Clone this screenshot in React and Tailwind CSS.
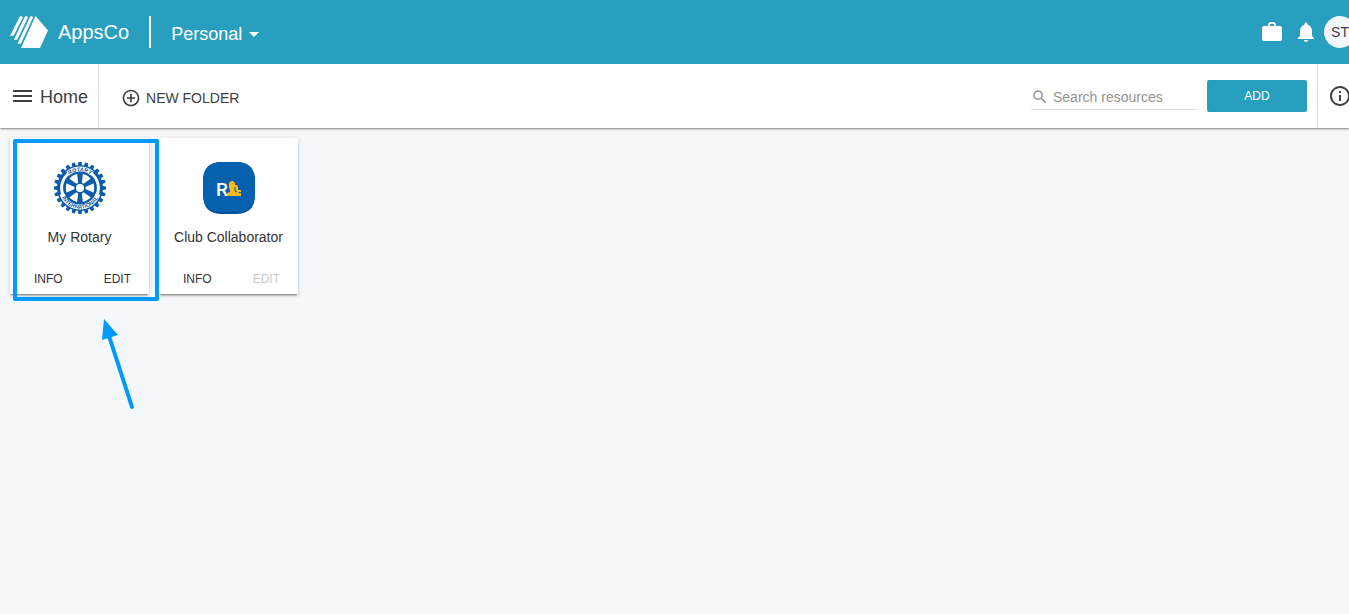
import React, { useState } from 'react';
import { MdAddCircleOutline, MdNotifications, MdOutlineInfo, MdSearch } from 'react-icons/md';

const TEETH = Array.from({ length: 24 }, (_, i) => i * 15);
const SPOKES = [0, 60, 120, 180, 240, 300];

const AppsCoLogo = () => (
  <svg width="38" height="32" viewBox="0 0 38 32" fill="#fff" aria-hidden="true">
    <path d="M25.5 0 L38 14.5 L30 32 H11 Z" />
    <path d="M9.5 1 L10.5 0 L13 1 L3.8 19.5 L0 20 Z" />
    <path d="M14.7 1 L15.7 0 L18.2 1 L7.4 23.5 L3.8 24 Z" />
    <path d="M20 1 L21 0 L23.2 1 L11 27.5 L7.4 28 Z" />
  </svg>
);

const BriefcaseIcon = () => (
  <svg width="20" height="20" viewBox="0 0 20 20" fill="#fff" aria-hidden="true">
    <path
      fillRule="evenodd"
      d="M8 0 H12 L14 2 V4 H18 Q20 4 20 6 V17 Q20 19 18 19 H2 Q0 19 0 17 V6 Q0 4 2 4 H6 V2 Z M8 2 V4 H12 V2 Z"
    />
  </svg>
);

const RotaryWheel = () => (
  <svg width="52" height="52" viewBox="-26 -26 52 52" aria-hidden="true">
    <defs>
      <path id="wheel-top" d="M-16.8 0 A16.8 16.8 0 0 1 16.8 0" />
      <path id="wheel-bottom" d="M-20.6 0 A20.6 20.6 0 0 0 20.6 0" />
    </defs>
    <g fill="#0a5dab">
      {TEETH.map((angle) => (
        <path key={angle} d="M-1.6 -26 H1.6 L2.2 -21 H-2.2 Z" transform={`rotate(${angle})`} />
      ))}
      <circle r="23" />
    </g>
    <circle r="18.4" fill="none" stroke="#fff" strokeWidth="3" />
    <g fill="none" stroke="#fff" strokeWidth="5">
      <path d="M-12.2 -14.5 A19 19 0 0 1 12.2 -14.5" />
      <path d="M-18 6 A19 19 0 0 0 18 6" />
    </g>
    <circle r="15.2" fill="#fff" stroke="#0a5dab" strokeWidth="2" />
    <g fill="#0a5dab">
      {SPOKES.map((angle) => (
        <path key={angle} d="M-1.7 -4 L-3 -15.5 H3 L1.7 -4 Z" transform={`rotate(${angle})`} />
      ))}
      <circle r="5.6" />
    </g>
    <circle r="4" fill="#fff" />
    <g fill="#0a5dab" fontFamily="Liberation Sans, sans-serif" fontWeight="700" fontSize="5.5" textAnchor="middle">
      <text>
        <textPath href="#wheel-top" startOffset="50%">ROTARY</textPath>
      </text>
      <text>
        <textPath href="#wheel-bottom" startOffset="50%">INTERNATIONAL</textPath>
      </text>
    </g>
  </svg>
);

const ClubIcon = () => (
  <svg width="52" height="52" viewBox="0 0 52 52" aria-hidden="true">
    <path
      fill="#04549b"
      d="M19 0 H33 Q52 0 52 19 V33 Q52 52 33 52 H19 Q0 52 0 33 V19 Q0 0 19 0 Z"
    />
    <path
      fill="#0560ae"
      d="M19 0 H33 Q52 0 52 19 V31 Q52 50 33 50 H19 Q0 50 0 31 V19 Q0 0 19 0 Z"
    />
    <text x="13" y="34" fill="#fff" fontFamily="Roboto, sans-serif" fontWeight="500" fontSize="19">
      R
    </text>
    <path
      fill="#fdb913"
      d="M24 34 V31 L27 30 V28 L26 26 V21 L28 19 H30 L32 21 V23 H34 L35 25 V28 H38 V30 H36 L35 31 H38 V34 Z"
    />
    <path d="M32 25 V29 L34 30" fill="none" stroke="#0560ae" />
  </svg>
);

const resources = [
  { name: 'My Rotary', icon: RotaryWheel, editable: true, highlighted: true },
  { name: 'Club Collaborator', icon: ClubIcon, editable: false, highlighted: false },
];

const Highlight = () => (
  <>
    <div className="pointer-events-none absolute top-px left-[3px] z-10 h-[162px] w-[146px] rounded-xs border-4 border-[#0099ff]" />
    <svg className="pointer-events-none absolute top-[180px] left-[90px]" width="36" height="92" viewBox="0 0 36 92" aria-hidden="true">
      <path d="M9 18 L32 89" stroke="#0099ff" strokeWidth="4" strokeLinecap="round" />
      <path d="M4 1 L18 17 L2 22 Z" fill="#0099ff" />
    </svg>
  </>
);

const ResourceCard = ({ name, icon: Icon, editable, highlighted }) => (
  <article className="relative w-[139px] bg-white pt-6 pb-[7px] shadow-[0_2px_2px_-1px_rgba(0,0,0,0.5),0_1px_5px_rgba(0,0,0,0.14)]">
    <div className="flex flex-col items-center gap-[11px]">
      <Icon />
      <h2 className="text-sm leading-6 whitespace-nowrap text-[#333]">{name}</h2>
    </div>
    <div className="mt-[22px] flex h-4 items-center justify-between pr-[18px] pl-6 text-xs text-[#333]">
      <button type="button">INFO</button>
      <button type="button" disabled={!editable} className="disabled:text-[#c9c9c9]">
        EDIT
      </button>
    </div>
    {highlighted && <Highlight />}
  </article>
);

const App = () => {
  const [search, setSearch] = useState('');

  return (
    <div className="min-h-screen overflow-x-hidden bg-[#f4f8fb] font-['Liberation_Sans',Arial,sans-serif] text-[#414042]">
      <header className="relative z-10 flex h-16 items-center bg-[#289fbe] pl-[10px] text-white">
        <a href="#home" className="flex items-center gap-[10px] text-xl">
          <AppsCoLogo />
          AppsCo
        </a>
        <div className="ml-5 h-8 w-[2px] bg-white" />
        <button type="button" className="ml-5 flex items-center gap-[7px] pt-1 text-lg">
          Personal
          <svg width="10" height="5" viewBox="0 0 10 5" fill="#fff" aria-hidden="true">
            <path d="M0 0 H10 L5 5 Z" />
          </svg>
        </button>
        <div className="-mr-[7px] ml-auto flex items-center">
          <button type="button" aria-label="Company">
            <BriefcaseIcon />
          </button>
          <button type="button" aria-label="Notifications" className="ml-3">
            <MdNotifications size={24} />
          </button>
          <button type="button" className="ml-[6px] size-8 rounded-full bg-[#f4f8fb] text-sm text-[#414042]">
            ST
          </button>
        </div>
      </header>

      <div className="relative flex h-16 items-center bg-white shadow-[0_1px_2px_rgba(0,0,0,0.5)]">
        <div className="flex h-full items-center gap-2 border-r border-[#dcdcdc] pr-[10px] pl-[13px]">
          <button type="button" aria-label="Menu">
            <svg width="19" height="12" viewBox="0 0 19 12" fill="#414042" aria-hidden="true">
              <path d="M0 0 H19 V2 H0 Z M0 5 H19 V7 H0 Z M0 10 H19 V12 H0 Z" />
            </svg>
          </button>
          <h1 className="pt-px text-lg">Home</h1>
        </div>
        <button type="button" className="ml-[22px] flex items-center gap-[5px] pt-[3px] text-sm">
          <MdAddCircleOutline size={20} />
          NEW FOLDER
        </button>
        <div className="ml-auto flex h-full items-center">
          <label className="flex w-[166px] items-center gap-1 border-b border-[#dcdcdc] pt-[3px] text-[#939393]">
            <MdSearch size={18} className="shrink-0" />
            <input
              type="text"
              aria-label="Search resources"
              placeholder="Search resources"
              value={search}
              onChange={(e) => setSearch(e.target.value)}
              className="w-full min-w-0 text-sm leading-6 outline-none placeholder:text-[#939393]"
            />
          </label>
          <button type="button" className="ml-[10px] h-8 w-[100px] rounded-xs bg-[#289fbe] text-xs text-white">
            ADD
          </button>
          <div className="-mr-[3px] ml-[10px] flex h-full items-center border-l border-[#dcdcdc] pl-[10px]">
            <button type="button" aria-label="Details">
              <MdOutlineInfo size={24} />
            </button>
          </div>
        </div>
      </div>

      <main className="flex flex-wrap gap-[10px] p-[10px]">
        {resources.map((resource) => (
          <ResourceCard key={resource.name} {...resource} />
        ))}
      </main>
    </div>
  );
};

export default App;
